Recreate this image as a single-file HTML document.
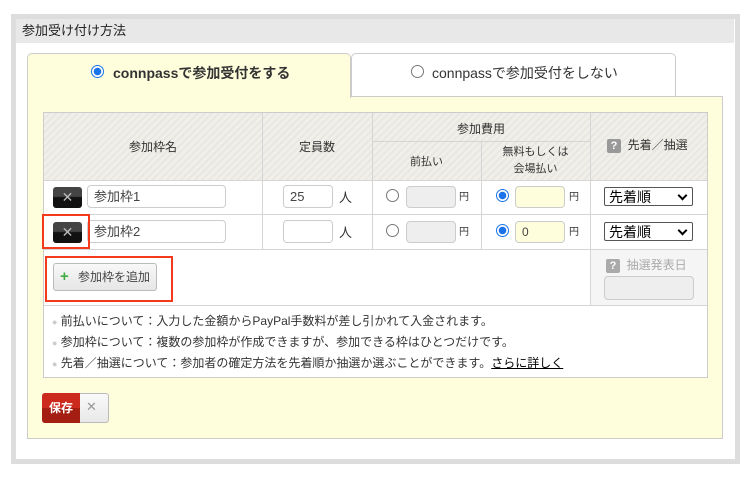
<!DOCTYPE html><html><head><meta charset="utf-8"><style>
*{box-sizing:border-box;margin:0;padding:0}
body{width:748px;height:484px;background:#fff;font-family:"Liberation Sans","Noto Sans CJK JP",sans-serif;font-size:12px;color:#333;position:relative;overflow:hidden}
.a{position:absolute}
.hatch{background:repeating-linear-gradient(135deg,#f0efea 0 3px,#e8e7e1 3px 5px)}
.inp{position:absolute;border:1px solid #ccc;border-radius:4px;background:#fff;font-size:13px;padding-left:6px;line-height:21px;color:#444}
.radio{position:absolute;width:13px;height:13px;border:1px solid #777;border-radius:50%;background:#fff}
.radio.on{border:1px solid #1a73e8;background:radial-gradient(circle,#1a73e8 0 3.5px,#fff 4px)}
.sel{position:absolute;border:1px solid #555;border-radius:2px;background:#fff;font-size:14px;line-height:18px;padding-left:4px;color:#000}
.sel:after{content:"";position:absolute;right:6px;top:4px;width:5px;height:5px;border-right:2px solid #000;border-bottom:2px solid #000;transform:rotate(45deg)}
.del{position:absolute;width:29px;height:21px;border-radius:3px;background:linear-gradient(#444 0 45%,#111 50%);color:#bbb;text-align:center;font-size:14px;line-height:21px}
.q{display:inline-block;width:14px;height:14px;background:#999;color:#fff;font-weight:bold;font-size:11px;line-height:14px;text-align:center;border-radius:2px;vertical-align:middle}
.c{text-align:center}
.v{position:absolute;background:#d5d5d5}
.yen{position:absolute;font-size:10px;line-height:12px}
</style></head><body>
<div class="a" style="left:11px;top:14px;width:729px;height:450px;border:5px solid #ddd;background:#fff"></div>
<div class="a" style="left:16px;top:19px;width:718px;height:24px;background:#e8e8e8;font-size:13px;line-height:24px;padding-left:6px;color:#222">参加受け付け方法</div>
<div class="a" style="left:27px;top:96px;width:696px;height:343px;background:#fffedc;border:1px solid #ccc"></div>
<div class="a" style="left:27px;top:53px;width:324px;height:45px;background:#fffedc;border:1px solid #ccc;border-bottom:none;border-radius:5px 5px 0 0;font-size:14px;font-weight:bold;line-height:38px;padding-left:85px">connpassで参加受付をする</div>
<div class="radio on" style="left:91px;top:65px"></div>
<div class="a" style="left:351px;top:53px;width:325px;height:44px;background:#fff;border:1px solid #ccc;border-radius:5px 5px 0 0;font-size:14px;line-height:38px;padding-left:80px">connpassで参加受付をしない</div>
<div class="radio" style="left:411px;top:65px"></div>
<div class="a" style="left:43px;top:112px;width:665px;height:266px;background:#fff;border:1px solid #ccc"></div>
<div class="a hatch" style="left:44px;top:113px;width:663px;height:67px"></div>
<div class="a" style="left:590px;top:249px;width:117px;height:56px;background:#f5f5f5"></div>
<div class="v" style="left:44px;top:180px;width:663px;height:1px"></div>
<div class="v" style="left:44px;top:214px;width:663px;height:1px"></div>
<div class="v" style="left:44px;top:249px;width:663px;height:1px"></div>
<div class="v" style="left:44px;top:305px;width:663px;height:1px"></div>
<div class="v" style="left:372px;top:141px;width:218px;height:1px"></div>
<div class="v" style="left:262px;top:113px;width:1px;height:136px"></div>
<div class="v" style="left:372px;top:113px;width:1px;height:136px"></div>
<div class="v" style="left:481px;top:141px;width:1px;height:108px"></div>
<div class="v" style="left:590px;top:113px;width:1px;height:192px"></div>
<div class="a c" style="left:44px;top:138px;width:218px">参加枠名</div>
<div class="a c" style="left:262px;top:138px;width:110px">定員数</div>
<div class="a c" style="left:372px;top:120px;width:218px">参加費用</div>
<div class="a c" style="left:372px;top:153px;width:109px;font-size:11px">前払い</div>
<div class="a c" style="left:481px;top:144px;width:109px;font-size:11px;line-height:17px">無料もしくは<br>会場払い</div>
<div class="a" style="left:607px;top:136px"><span class="q">?</span>&nbsp; 先着／抽選</div>
<div class="del" style="left:53px;top:187px">✕</div>
<div class="inp" style="left:87px;top:185px;width:139px;height:23px">参加枠1</div>
<div class="inp" style="left:283px;top:185px;width:50px;height:23px">25</div>
<div class="a" style="left:339px;top:187px;font-size:13px">人</div>
<div class="radio" style="left:386px;top:189px"></div>
<div class="inp" style="left:406px;top:186px;width:50px;height:22px;background:#eee"></div>
<div class="yen" style="left:459px;top:192px">円</div>
<div class="radio on" style="left:496px;top:189px"></div>
<div class="inp" style="left:515px;top:186px;width:50px;height:22px;background:#fffedc"></div>
<div class="yen" style="left:569px;top:192px">円</div>
<div class="sel" style="left:604px;top:187px;width:89px;height:19px">先着順</div>
<div class="del" style="left:53px;top:222px">✕</div>
<div class="inp" style="left:87px;top:220px;width:139px;height:23px">参加枠2</div>
<div class="inp" style="left:283px;top:220px;width:50px;height:23px"></div>
<div class="a" style="left:339px;top:222px;font-size:13px">人</div>
<div class="radio" style="left:386px;top:224px"></div>
<div class="inp" style="left:406px;top:221px;width:50px;height:22px;background:#eee"></div>
<div class="yen" style="left:459px;top:227px">円</div>
<div class="radio on" style="left:496px;top:224px"></div>
<div class="inp" style="left:515px;top:221px;width:50px;height:22px;background:#fffedc;font-size:12px">0</div>
<div class="yen" style="left:569px;top:227px">円</div>
<div class="sel" style="left:604px;top:222px;width:89px;height:19px">先着順</div>
<div class="a" style="left:42px;top:214px;width:48px;height:35px;border:2px solid #f33a1a"></div>
<div class="a" style="left:53px;top:263px;width:104px;height:28px;border:1px solid #bbb;border-radius:3px;background:linear-gradient(#f8f8f8,#e6e6e6);line-height:26px;padding-left:24px;color:#444">参加枠を追加</div>
<div class="a" style="left:60px;top:268px;color:#4a4;font-weight:bold;font-size:15px">+</div>
<div class="a" style="left:45px;top:256px;width:128px;height:46px;border:2px solid #f33a1a"></div>
<div class="a" style="left:606px;top:256px;color:#aaa"><span class="q" style="background:#aaa">?</span>&nbsp; 抽選発表日</div>
<div class="a" style="left:604px;top:276px;width:90px;height:24px;border:1px solid #ccc;border-radius:4px;background:#eee"></div>
<div class="a" style="left:52px;top:311px;font-size:12px;line-height:20px;color:#333;white-space:nowrap">
<div><span style="color:#ccc;font-size:9px">●</span> 前払いについて：入力した金額からPayPal手数料が差し引かれて入金されます。</div>
<div><span style="color:#ccc;font-size:9px">●</span> 参加枠について：複数の参加枠が作成できますが、参加できる枠はひとつだけです。</div>
<div><span style="color:#ccc;font-size:9px">●</span> 先着／抽選について：参加者の確定方法を先着順か抽選か選ぶことができます。<u style="color:#000">さらに詳しく</u></div>
</div>
<div class="a" style="left:42px;top:393px;width:67px;height:30px;border:1px solid #bbb;border-radius:3px;background:linear-gradient(#fafafa,#e8e8e8)"></div>
<div class="a" style="left:42px;top:393px;width:38px;height:30px;border-radius:3px 0 0 3px;background:linear-gradient(#cc2a1c 0 50%,#a51e12 50%);color:#fff;font-weight:bold;font-size:12px;line-height:30px;text-align:center">保存</div>
<div class="a" style="left:86px;top:399px;color:#999;font-size:13px">✕</div>
</body></html>
